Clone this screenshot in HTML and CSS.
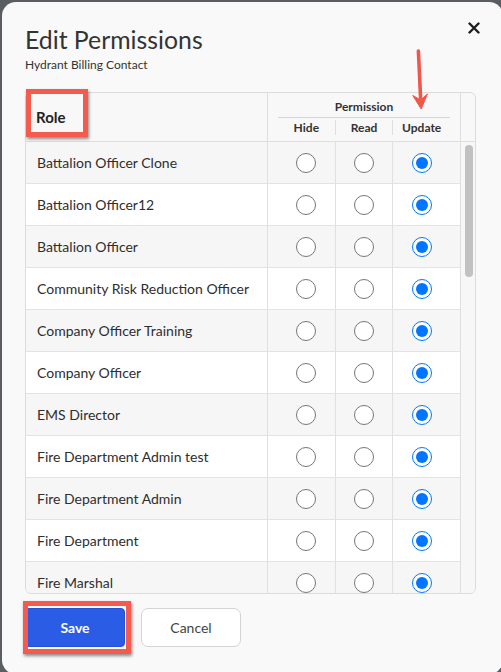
FILE: index.html
```html
<!DOCTYPE html>
<html lang="en">
<head>
<meta charset="utf-8">
<title>Edit Permissions</title>
<link rel="stylesheet" href="styles.css">
</head>
<body>
<div class="modal">
  <div class="modal-head">
    <h1 class="title">Edit Permissions</h1>
    <button class="close" aria-label="Close">
      <svg width="12" height="12" viewBox="0 0 12 12"><path d="M1.5 1.5 L10.5 10.5 M10.5 1.5 L1.5 10.5" stroke="#1e1e1e" stroke-width="2.4" stroke-linecap="round"/></svg>
    </button>
  </div>
  <div class="subtitle">Hydrant Billing Contact</div>

  <div class="table">
    <div class="thead">
      <div class="th-role">Role</div>
      <div class="th-perm">
        <div class="perm-title">Permission</div>
        <div class="perm-subs">
          <div class="sub">Hide</div>
          <div class="sub">Read</div>
          <div class="sub">Update</div>
        </div>
      </div>
      <div class="th-spacer"></div>
    </div>
    <div class="tbody">
      <div class="rows">
        <div class="row"><div class="role">Battalion Officer Clone</div><div class="perm"><div class="cell"><input type="radio" name="r1"></div><div class="cell"><input type="radio" name="r1"></div><div class="cell"><input type="radio" name="r1" checked></div></div></div>
        <div class="row"><div class="role">Battalion Officer12</div><div class="perm"><div class="cell"><input type="radio" name="r2"></div><div class="cell"><input type="radio" name="r2"></div><div class="cell"><input type="radio" name="r2" checked></div></div></div>
        <div class="row"><div class="role">Battalion Officer</div><div class="perm"><div class="cell"><input type="radio" name="r3"></div><div class="cell"><input type="radio" name="r3"></div><div class="cell"><input type="radio" name="r3" checked></div></div></div>
        <div class="row"><div class="role">Community Risk Reduction Officer</div><div class="perm"><div class="cell"><input type="radio" name="r4"></div><div class="cell"><input type="radio" name="r4"></div><div class="cell"><input type="radio" name="r4" checked></div></div></div>
        <div class="row"><div class="role">Company Officer Training</div><div class="perm"><div class="cell"><input type="radio" name="r5"></div><div class="cell"><input type="radio" name="r5"></div><div class="cell"><input type="radio" name="r5" checked></div></div></div>
        <div class="row"><div class="role">Company Officer</div><div class="perm"><div class="cell"><input type="radio" name="r6"></div><div class="cell"><input type="radio" name="r6"></div><div class="cell"><input type="radio" name="r6" checked></div></div></div>
        <div class="row"><div class="role">EMS Director</div><div class="perm"><div class="cell"><input type="radio" name="r7"></div><div class="cell"><input type="radio" name="r7"></div><div class="cell"><input type="radio" name="r7" checked></div></div></div>
        <div class="row"><div class="role">Fire Department Admin test</div><div class="perm"><div class="cell"><input type="radio" name="r8"></div><div class="cell"><input type="radio" name="r8"></div><div class="cell"><input type="radio" name="r8" checked></div></div></div>
        <div class="row"><div class="role">Fire Department Admin</div><div class="perm"><div class="cell"><input type="radio" name="r9"></div><div class="cell"><input type="radio" name="r9"></div><div class="cell"><input type="radio" name="r9" checked></div></div></div>
        <div class="row"><div class="role">Fire Department</div><div class="perm"><div class="cell"><input type="radio" name="r10"></div><div class="cell"><input type="radio" name="r10"></div><div class="cell"><input type="radio" name="r10" checked></div></div></div>
        <div class="row"><div class="role">Fire Marshal</div><div class="perm"><div class="cell"><input type="radio" name="r11"></div><div class="cell"><input type="radio" name="r11"></div><div class="cell"><input type="radio" name="r11" checked></div></div></div>
      </div>
      <div class="track"><div class="thumb"></div></div>
    </div>
  </div>

  <div class="actions">
    <button class="btn btn-save">Save</button>
    <button class="btn btn-cancel">Cancel</button>
  </div>

  <div class="mark mark-role"></div>
  <div class="mark mark-save"></div>
  <svg class="arrow" width="24" height="66" viewBox="410 46 24 66">
    <path d="M418.4 51 L420.6 98" stroke="#f0564a" stroke-width="3.6" stroke-linecap="round" fill="none"/>
    <path d="M412.8 95.5 L420.8 100 L427.4 94 L421.2 109 Z" fill="#f0564a" stroke="#f0564a" stroke-width="1" stroke-linejoin="round"/>
  </svg>
</div>
</body>
</html>
```

FILE: styles.css
```css
html, body {
  margin: 0;
  padding: 0;
  height: 100%;
  overflow: hidden;
}
body {
  background: #5a5d61;
  font-family: Lato, "Open Sans", "Liberation Sans", sans-serif;
  color: #333;
}
.modal {
  position: relative;
  box-sizing: border-box;
  margin: 2px 0 0 2px;
  width: 501px;
  height: 672px;
  border-radius: 14px;
  background: #f9f9f9;
  padding: 23px 27px 0 23px;
}
.modal-head {
  display: flex;
  justify-content: space-between;
  align-items: flex-start;
}
.title {
  margin: 0;
  font-size: 24.8px;
  font-weight: 400;
  line-height: 29px;
  color: #333;
}
.close {
  margin: -3px -4px 0 0;
  padding: 0;
  border: 0;
  background: none;
  width: 12px;
  height: 12px;
  display: block;
}
.close svg { display: block; }
.subtitle {
  margin-top: 3px;
  font-size: 12px;
  line-height: 15px;
  color: #333;
}
.table {
  margin-top: 20px;
  width: 451px;
  box-sizing: border-box;
  border: 1px solid #dcdcdc;
  border-radius: 6px;
  overflow: hidden;
  background: #f8f8f8;
}
.thead {
  display: flex;
  height: 48px;
  border-bottom: 1px solid #dedede;
}
.th-role {
  box-sizing: border-box;
  width: 242px;
  border-right: 1px solid #dedede;
  display: flex;
  align-items: center;
  padding-left: 10px;
  font-size: 15px;
  font-weight: 700;
  color: #222;
}
.th-perm {
  box-sizing: border-box;
  width: 193px;
  border-right: 1px solid #dedede;
  padding: 7px 10px 0 10px;
  font-size: 12px;
  font-weight: 700;
  color: #333;
}
.perm-title {
  text-align: center;
  line-height: 14px;
  padding-bottom: 3px;
  border-bottom: 1px solid #d6d6d6;
}
.perm-subs {
  display: flex;
  margin-top: 2px;
}
.sub {
  flex: 1;
  text-align: center;
  line-height: 15px;
}
.sub + .sub { border-left: 1px solid #dedede; }
.th-spacer { flex: 1; }
.tbody {
  display: flex;
  height: 451px;
}
.rows {
  width: 434px;
  overflow: hidden;
}
.row {
  display: flex;
  height: 41px;
  border-bottom: 1px solid #e2e2e8;
  background: #f6f6f6;
}
.row:nth-child(even) { background: #ffffff; }
.role {
  box-sizing: border-box;
  width: 242px;
  border-right: 1px solid #e0e0e0;
  display: flex;
  align-items: center;
  padding-left: 11px;
  font-size: 14px;
  color: #2e2e2e;
}
.perm {
  width: 192px;
  box-sizing: border-box;
  padding: 0 10px;
  display: flex;
}
.cell {
  flex: 1;
  display: flex;
  align-items: center;
  justify-content: center;
}
.cell + .cell { border-left: 1px solid #e0e0e0; }
.cell input {
  width: 20px;
  height: 20px;
  margin: 0;
  accent-color: #0075ff;
}
.track {
  flex: 1;
  border-left: 1px solid #e0e0e0;
  background: #f7f7f7;
  padding: 3px 2px 0 4px;
}
.thumb {
  height: 132px;
  border-radius: 4px;
  background: #c1c1c1;
}
.actions {
  display: flex;
  gap: 16px;
  margin-top: 14px;
}
.btn {
  box-sizing: border-box;
  height: 39px;
  font-family: Lato, "Open Sans", "Liberation Sans", sans-serif;
  font-size: 14px;
  border-radius: 6px;
  padding: 0;
}
.btn-save {
  width: 100px;
  background: #2b5ce6;
  color: #fff;
  font-weight: 700;
  border: 1px solid #2452d4;
  border-radius: 4px;
}
.btn-cancel {
  width: 100px;
  background: #fff;
  color: #444;
  border: 1px solid #d4d4d4;
  border-radius: 7px;
}
.mark {
  position: absolute;
  box-sizing: border-box;
  border: 5px solid #f45a4e;
  box-shadow: 1px 2px 3px rgba(0, 0, 0, 0.45);
}
.mark-role {
  left: 24px;
  top: 87px;
  width: 62px;
  height: 48px;
}
.mark-save {
  left: 21px;
  top: 599px;
  width: 108px;
  height: 53px;
}
.arrow {
  position: absolute;
  left: 408px;
  top: 44px;
}
```
